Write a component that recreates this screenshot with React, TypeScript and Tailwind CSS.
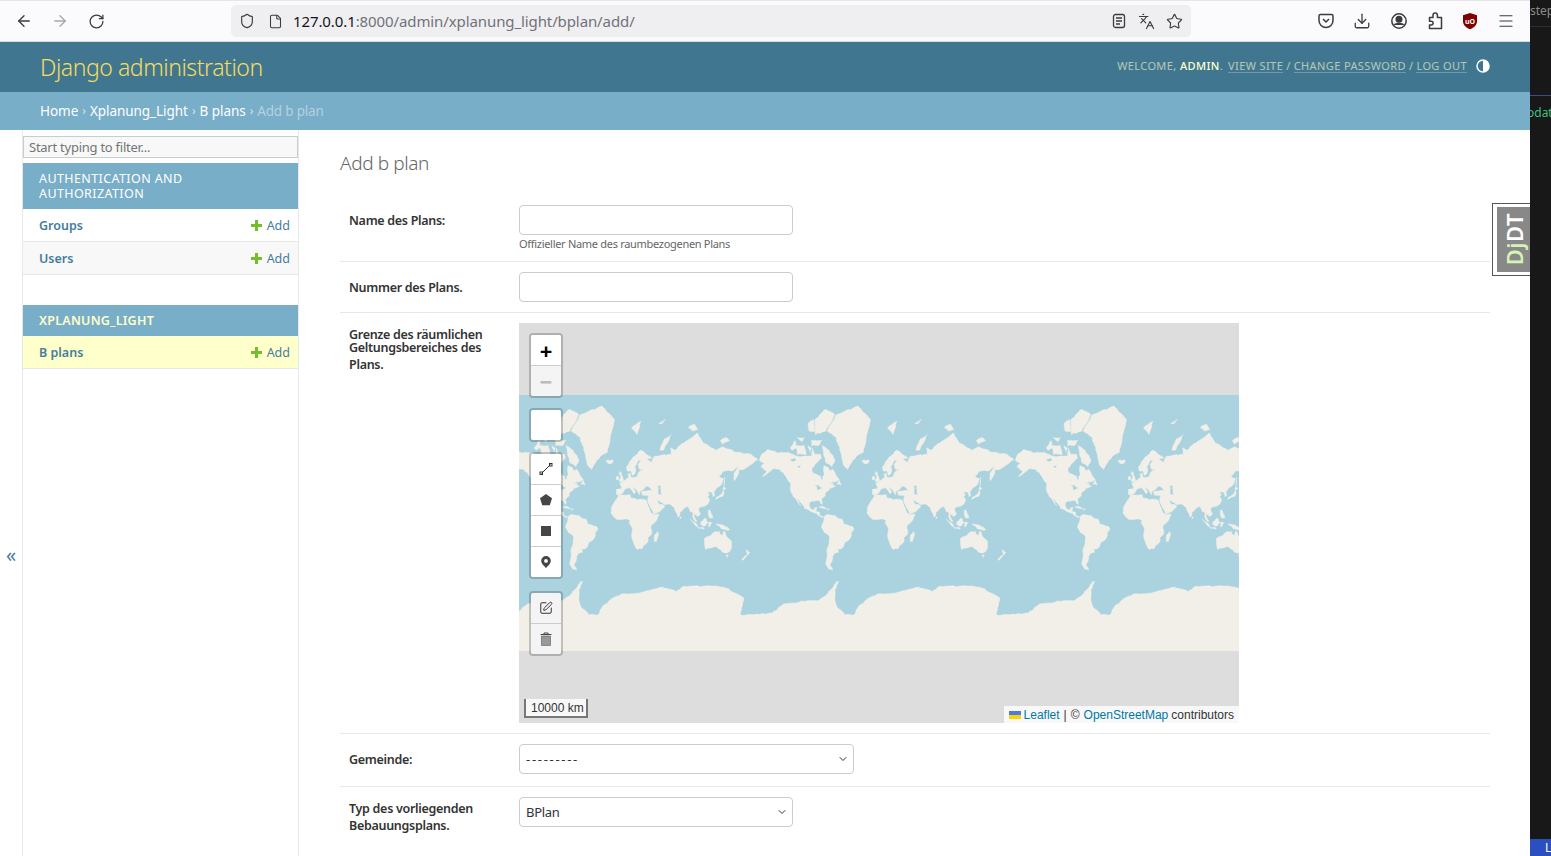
import { ArrowLeft, ArrowRight, ChevronDown, Languages, RotateCw, Shield, Star, Download, File, Menu, SquarePen } from 'lucide-react';

// rough coastlines as lon/lat, projected to a 256px web mercator tile
const LAND: number[][][] = [
  // north america
  [[-168,65.5],[-166,68.5],[-156.5,71.3],[-141,69.7],[-128,70],[-115,68],[-108,68],[-95,68],[-94,72],[-90,69],[-82,69],[-81,67],[-87,64.5],[-94,61],[-94.5,59],[-92,57],[-85,55.3],[-82,55],[-82,52.5],[-79.5,51.5],[-79,54.5],[-77,56],[-78,59],[-77.5,62.5],[-72,61.5],[-69,58.8],[-65,60],[-60,55],[-56,52],[-60,50],[-66,50],[-70,47],[-65,49],[-64.5,47],[-61,46],[-66,44],[-70,43.5],[-70,41.5],[-74,40.5],[-76,37],[-75.5,35.3],[-81,31.5],[-80,26],[-81,25.2],[-82.8,28],[-84,30],[-89,30],[-90,29],[-94,29.5],[-97.5,27.5],[-97.5,22],[-95,18.5],[-91,18.5],[-90.5,21],[-87,21.5],[-88,16],[-83.5,15],[-83.5,11],[-80,9],[-77.5,8.5],[-80,7.5],[-85,10],[-87.5,13],[-92,14.5],[-96,16],[-105,20],[-105.5,23],[-110,27.5],[-113,31.5],[-114.7,31],[-112,26],[-109.5,23],[-112,25],[-115,29],[-117,32.5],[-120.5,34.5],[-124,40],[-124,48],[-128,51],[-133,56],[-140,60],[-148,60.5],[-152,59],[-158,56.5],[-164,54.5],[-158,58.5],[-162,60],[-166,62],[-161,64]],
  // south america
  [[-77.5,8.5],[-75,11],[-72,12],[-68,11],[-62,10.5],[-57,6],[-51,4.5],[-50,0],[-44,-2.5],[-37,-5],[-35,-8],[-39,-14],[-39,-18],[-41,-22],[-48,-26],[-49,-29],[-53,-34],[-58,-34.5],[-57,-38],[-62,-39],[-65,-42],[-66,-47],[-69,-51],[-65,-55],[-71,-54],[-75,-50],[-73,-42],[-73.5,-37],[-71,-30],[-70,-18],[-76,-14],[-81,-6],[-80,-2],[-78,2],[-77,7]],
  // africa
  [[-6,35.8],[10,37],[11,33.5],[20,31],[25,32],[32,31],[34,27],[37,21],[39,15],[43,12],[51,12],[48,5],[40,-3],[39,-7],[40.5,-15],[35,-20],[35.5,-24],[32.5,-28],[27,-34],[20,-34.8],[18,-33],[15,-27],[12,-17],[13.5,-10],[12,-5],[9,-1],[9.5,4],[5,5.5],[-4,5],[-8,4.5],[-13,8.5],[-17,14.5],[-16.5,20],[-13,27],[-9.5,31]],
  // eurasia
  [[-9,37],[-9,43],[-1.5,43.5],[-4.5,48.5],[2,51],[8,54],[8,57],[10.5,57],[11,54],[20,54.5],[21,57],[24,59],[30,60],[23,60],[21,63],[25,65.5],[22,65.8],[17,62],[18,59.5],[16,56],[13,55.5],[11,59],[5.5,59],[5,62],[14,67.5],[25,71],[41,67],[33,66.5],[40,64.5],[44,68],[54,68.5],[68,69],[67,72],[73,71],[80,73],[105,77.5],[113,74],[130,71],[140,72.5],[160,70],[180,69],[190,66],[179,63],[170,60],[163,60],[162,56],[156.5,51],[156,57],[163,62],[155,59],[142,59],[135,54.5],[141,53],[138,47],[131,43],[128,40],[129,36],[126.5,34.5],[126,37.5],[125,39.5],[122,40],[118,39],[122,37],[119,35],[122,31],[120,26],[114,22.5],[108,21.5],[106,19],[109,13],[105,9],[100.5,13.5],[100,9],[104,1.5],[101,3],[98,8.5],[98,15],[94.5,16],[91,22.5],[87,21],[80,15],[80,11],[77.5,8],[73,18],[72,21],[67,25],[57,25.5],[56,27],[50,30],[48,30],[51,25],[56,25],[59,22.5],[52,16],[43.5,12.5],[39,21],[35,28],[34.5,31.5],[36,36],[27,36.5],[26,40],[29,41],[41,41.5],[37,45],[33,46],[28,42],[24,40.5],[23,36.5],[19,42],[13,45.5],[18,40],[15.5,38],[12,42],[9,44.3],[3,43],[0,39],[-5,36]],
  // greenland and arctic islands
  [[-73,78],[-60,82],[-30,83.5],[-12,81],[-18,76],[-22,70],[-32,68],[-42,62],[-44,60],[-50,63],[-54,70],[-60,76]],
  [[-80,73],[-70,71],[-62,66],[-66,62],[-74,64],[-78,69]],
  [[-117,73],[-105,73],[-102,69],[-115,69]],
  [[-90,77],[-75,78],[-62,82],[-75,83],[-90,81]],
  [[-125,72],[-118,75],[-117,72],[-122,71]],
  [[-95,75],[-80,75],[-85,73],[-95,73]],
  [[-115,76],[-105,76],[-108,74.5]],
  [[-100,80],[-92,81],[-90,78],[-98,78]],
  [[-100,73],[-95,72],[-97,70]],
  [[-59,48],[-56,51.5],[-53,47]],
  [[-24,65.5],[-14,66],[-14,64.5],[-20,63.5]],
  [[-5,50],[1,51],[0,53],[-2,56],[-3,58.5],[-6,57],[-3,54],[-5,52]],
  [[-10,52],[-6,52],[-6,55],[-9,54.5]],
  [[12,79],[25,80.5],[20,77]],
  [[52,71],[57,71],[68,77],[58,75.5]],
  [[50,80],[60,81],[55,80]],
  [[92,79],[100,80],[105,78.5],[98,78]],
  [[137,75],[146,76],[150,75],[140,73.5]],
  // asia pacific islands
  [[130,32],[135,34],[140,35],[142,40],[141,41.5],[139,38],[135,35.5],[131,34]],
  [[140,42],[145,43.5],[142,45.5]],
  [[142,46],[143,50],[143,54],[142,50]],
  [[120,18],[122,18],[124,13],[126,7],[122,7],[120,14]],
  [[109,1],[117,7],[119,1],[116,-4],[110,-3]],
  [[95,5.5],[104,-2],[106,-6],[101,-3]],
  [[105,-6.5],[114,-7],[114,-8.5],[106,-7.5]],
  [[120,1],[125,1],[122,-5],[120,-5]],
  [[131,-1],[141,-3],[147,-6],[150,-10],[143,-9],[138,-8]],
  [[80,9.5],[82,7],[80.5,6]],
  [[49,-12],[50,-16],[47,-25],[44,-25],[44,-17]],
  // australia, nz
  [[114,-22],[122,-18],[126,-14],[130,-12],[136,-12],[136,-15],[140,-17.5],[142,-11],[146,-19],[153,-26],[153,-31],[150,-37],[146,-39],[140,-38],[137,-35],[131,-31.5],[124,-33],[116,-35],[115,-31]],
  [[145,-41],[148,-41],[147,-43.5]],
  [[173,-35],[178,-38],[175,-41.5]],
  [[173,-41],[174,-42],[168,-46.5],[167,-45]],
  [[-85,22],[-80,23],[-74,20],[-78,20]],
  [[-74,19.5],[-69,19],[-71,18]],
  // antarctica, runs a little past the tile so copies overlap at the seam
  [[-183,-78],[-150,-77.5],[-135,-74.5],[-120,-74],[-100,-73],[-85,-73],[-75,-71],[-68,-68],[-60,-63.5],[-57,-63],[-62,-68],[-62,-72],[-60,-75],[-48,-78],[-35,-78],[-28,-75],[-15,-72],[0,-70],[15,-70],[30,-69],[40,-68],[55,-66.5],[70,-68],[75,-69],[85,-66],[100,-66],[115,-66],[130,-66],[145,-67],[160,-70],[170,-72],[165,-78],[183,-78],[183,-87],[-183,-87]],
];

const WATER = [
  [[50,37],[54,37],[53,42],[53,46.5],[49,46],[50,42]],
  [[-92,47],[-85,47],[-84,46],[-88,46.500]],
  [[-88,46],[-84,45.500],[-80,44],[-83,43],[-87,42]],
  [[-125,66],[-118,67],[-117,65.500],[-122,65]],
  [[-115,62],[-110,62.500],[-112,61]],
];

function project([lon, lat]: number[]) {
  const x = ((lon + 180) / 360) * 256;
  const y = 128 - (256 / (2 * Math.PI)) * Math.log(Math.tan(Math.PI / 4 + (lat * Math.PI) / 360));
  return [x, y];
}

// cheap repeatable noise so the coast looks jagged instead of straight
let seed = 7;
const wobble = () => {
  seed = (seed * 16807) % 2147483647;
  return (seed / 2147483647 - 0.5) * 1.1;
};

function toPath(poly: number[][]) {
  const pts = poly.map(project);
  let d = '';
  pts.forEach((p, i) => {
    const n = pts[(i + 1) % pts.length];
    const steps = Math.max(1, Math.round(Math.hypot(n[0] - p[0], n[1] - p[1]) / 2.5));
    d += `${d ? 'L' : 'M'}${p[0].toFixed(1)} ${p[1].toFixed(1)}`;
    for (let s = 1; s < steps; s++) {
      const x = p[0] + ((n[0] - p[0]) * s) / steps + wobble();
      const y = p[1] + ((n[1] - p[1]) * s) / steps + wobble();
      d += `L${x.toFixed(1)} ${y.toFixed(1)}`;
    }
  });
  return d + 'Z';
}

const landPath = LAND.map(toPath).join('');
const waterPath = WATER.map(toPath).join('');

function WorldMap() {
  return (
    <svg className="absolute inset-0" width="720" height="400" viewBox="0 0 720 400">
      <rect x="0" y="72" width="720" height="256" fill="#aad3df" />
      <clipPath id="tile"><rect x="0" y="72" width="720" height="256" /></clipPath>
      <g clipPath="url(#tile)">
        {[-280, -24, 232, 488].map((x) => (
          <g key={x} transform={`translate(${x} 72)`}>
            <path d={landPath} fill="#f2efe9" stroke="#f2efe9" strokeWidth="0.4" strokeLinejoin="round" />
            <path d={waterPath} fill="#aad3df" />
          </g>
        ))}
      </g>
    </svg>
  );
}

function NavRow({ label, striped, current }: { label: string; striped?: boolean; current?: boolean }) {
  return (
    <div className={`h-[33px] flex items-center justify-between pl-4 pr-2 pt-[2px] border-b border-[#e8e8e8] text-[12.5px] ${current ? 'bg-[#ffffcc]' : striped ? 'bg-[#f8f8f8]' : 'bg-white'}`}>
      <span className="font-semibold text-[#447e9b]">{label}</span>
      <span className="flex items-center gap-[5px] text-[#447e9b]">
        <svg className="-mt-[2px]" width="11" height="11" viewBox="0 0 11 11"><path d="M4 0h3v4h4v3H7v4H4V7H0V4h4z" fill="#70bf2b" /></svg>
        Add
      </span>
    </div>
  );
}

function BarButton({ children, muted, last }: { children?: React.ReactNode; muted?: boolean; last?: boolean }) {
  return (
    <div className={`w-[30px] flex items-center justify-center ${muted ? 'bg-[#f4f4f4]' : 'bg-white'} ${last ? 'h-[30px]' : 'h-[31px] border-b border-[#ccc]'}`}>
      {children}
    </div>
  );
}

function Bar({ children, className }: { children: React.ReactNode; className?: string }) {
  return (
    <div className={`w-[34px] border-2 border-black/20 rounded-[4px] bg-clip-padding overflow-hidden ${className ?? ''}`}>
      {children}
    </div>
  );
}

function FormRow({ label, children, bottomClass }: { label: React.ReactNode; children: React.ReactNode; bottomClass?: string }) {
  return (
    <div className={`flex border-b border-[#e8e8e8] px-[9px] pt-[10px] ${bottomClass ?? 'pb-[10px]'}`}>
      <div className="w-[170px] shrink-0 text-[12.5px] font-semibold text-[#333] tracking-[-0.3px]">{label}</div>
      <div>{children}</div>
    </div>
  );
}

function SelectBox({ width, value, textClass }: { width: string; value: string; textClass: string }) {
  return (
    <div className={`${width} h-[30px] border border-[#ccc] rounded-[4px] bg-white flex items-center justify-between pl-[6px] pr-[4px] text-[13px] text-[#333]`}>
      <span className={`pt-px ${textClass}`}>{value}</span>
      <ChevronDown size={12} strokeWidth={2} className="text-[#333]" />
    </div>
  );
}

export default function App() {
  return (
    <div className="h-screen w-full overflow-hidden flex bg-[#181818] font-['Noto_Sans',sans-serif]">
      <div className="w-[1530px] shrink-0 h-full flex flex-col bg-white relative">
        {/* Browser toolbar */}
        <div className="h-[42px] shrink-0 bg-[#fbfbfd] border-t border-[#e6e6e8] border-b-[#d9d9dd] border-b flex items-center pl-[15px] pr-[15px] text-[#3b3b40]">
          <ArrowLeft size={18} strokeWidth={1.8} />
          <ArrowRight size={18} strokeWidth={1.8} className="ml-[18px] text-[#a8a8ab]" />
          <RotateCw size={17} strokeWidth={1.8} className="ml-[19px]" />
          <div className="ml-[126px] w-[960px] h-[32px] rounded-[5px] bg-[#efeff1] flex items-center pl-[8px] pr-[8px]">
            <Shield size={16} strokeWidth={1.7} />
            <File size={15} strokeWidth={1.7} className="ml-[13px]" />
            <span className="ml-[10px] text-[15px] tracking-[-0.1px] text-[#15141a]">127.0.0.1<span className="text-[#72727a]">:8000/admin/xplanung_light/bplan/add/</span></span>
            <div className="ml-auto flex items-center gap-[11px]">
              <svg width="16" height="16" viewBox="0 0 16 16" fill="none" stroke="currentColor" strokeWidth="1.3"><rect x="2.5" y="1.5" width="11" height="13" rx="2" /><path d="M5 5h6M5 8h6M5 11h4" /></svg>
              <Languages size={17} strokeWidth={1.6} />
              <Star size={17} strokeWidth={1.6} />
            </div>
          </div>
          <div className="ml-auto flex items-center gap-[18px]">
            <svg width="18" height="18" viewBox="0 0 18 18" fill="none" stroke="currentColor" strokeWidth="1.5"><path d="M3.5 2.5h11a1.5 1.5 0 0 1 1.5 1.5v4.5a7 7 0 0 1-14 0V4a1.500 1.500 0 0 1 1.500-1.500z" /><path d="M6 7l3 3 3-3" /></svg>
            <Download size={18} strokeWidth={1.7} />
            <svg className="ml-px" width="18" height="18" viewBox="0 0 18 18" fill="none" stroke="currentColor" strokeWidth="1.5"><circle cx="9" cy="9" r="7.2" /><circle cx="9" cy="7.200" r="2.800" fill="currentColor" /><path d="M4.500 13c1-2 8-2 9 0" fill="currentColor" /></svg>
            <svg width="18" height="18" viewBox="0 0 18 18" fill="none" stroke="currentColor" strokeWidth="1.5" strokeLinejoin="round"><path d="M7 5.500V3.200a2.200 2.200 0 0 1 4.400 0V5.500h4.100v11H3.500V13h1.700a1.900 1.900 0 0 0 0-3.800H3.500V5.500z" /></svg>
            <svg className="-ml-px" width="18" height="18" viewBox="0 0 18 18"><path d="M9 1l7 2.200v6c0 4-3.500 6.800-7 8-3.500-1.200-7-4-7-8v-6z" fill="#800000" /><text x="9" y="11.500" textAnchor="middle" fontSize="7" fontWeight="700" fill="#fff" fontFamily="Noto Sans, sans-serif">uO</text></svg>
            <Menu size={18} strokeWidth={1.6} />
          </div>
        </div>

        {/* Django header */}
        <div className="h-[50px] shrink-0 bg-[#417690] flex items-center justify-between pl-10 pr-10">
          <span className="text-[23px] font-light text-[#f5dd5d] tracking-[-0.45px]">Django administration</span>
          <div className="flex items-center pb-[2px] text-[11px] tracking-[0.4px] uppercase text-[#ffffcc]/60">
            <span>Welcome, <strong className="font-medium text-[#ffffcc]">admin</strong>.</span>
            <span className="ml-[5px] border-b border-white/25 leading-[13px]">View site</span>
            <span className="mx-[3px]">/</span>
            <span className="border-b border-white/25 leading-[13px]">Change password</span>
            <span className="mx-[3px]">/</span>
            <span className="border-b border-white/25 leading-[13px]">Log out</span>
            <svg className="ml-[9px]" width="14" height="14" viewBox="0 0 14 14"><circle cx="7" cy="7" r="6" fill="none" stroke="#fff" strokeWidth="1.500" /><path d="M7 1a6 6 0 0 1 0 12z" fill="#fff" /></svg>
          </div>
        </div>

        {/* Breadcrumbs */}
        <div className="h-[38px] shrink-0 bg-[#79aec8] flex items-center pl-10 text-[13.5px] text-white tracking-[-0.05px]">
          <span>Home</span>
          <span className="mx-[4px] text-white/70 text-[12px]">›</span>
          <span>Xplanung_Light</span>
          <span className="mx-[4px] text-white/70 text-[12px]">›</span>
          <span>B plans</span>
          <span className="mx-[4px] text-white/70 text-[12px]">›</span>
          <span className="text-white/45 tracking-[-0.2px]">Add b plan</span>
        </div>

        <div className="flex flex-1 min-h-0">
          {/* Sidebar toggle */}
          <div className="w-[23px] shrink-0 border-r border-[#e8e8e8] flex items-center justify-center pt-[124px] text-[20px] text-[#447e9b]">«</div>

          {/* Sidebar */}
          <div className="w-[276px] shrink-0 border-r border-[#e8e8e8] pt-[6px]">
            <div className="h-[22px] border border-[#ccc] bg-[#f8f8f8] flex items-center pl-[5px] pt-px text-[13px] text-[#757575] tracking-[-0.25px]">Start typing to filter...</div>
            <div className="mt-[5px] bg-[#79aec8] pl-4 pr-4 pt-[8px] pb-[8px] text-[12.5px] leading-[15px] tracking-[0.4px] text-white uppercase h-[46px]">Authentication and Authorization</div>
            <NavRow label="Groups" />
            <NavRow label="Users" striped />
            <div className="mt-[30px] h-[31px] bg-[#79aec8] flex items-center pl-4 pt-px text-[12.5px] font-semibold tracking-[0.25px] text-[#ffffcc] uppercase">Xplanung_Light</div>
            <NavRow label="B plans" current />
          </div>

          {/* Content */}
          <div className="flex-1 min-w-0 pl-[41px] pr-10 pt-[20px]">
            <h1 className="text-[19px] leading-[26px] font-light text-[#666] tracking-[-0.4px] mb-[19px]">Add b plan</h1>

            <FormRow label={<span className="block pt-[7px]">Name des Plans:</span>}>
              <div className="w-[274px] h-[30px] border border-[#ccc] rounded-[4px]" />
              <p className="mt-px text-[11px] leading-[15px] text-[#666] tracking-[-0.3px]">Offizieller Name des raumbezogenen Plans</p>
            </FormRow>
            <FormRow label={<span className="block pt-[7px]">Nummer des Plans.</span>}>
              <div className="w-[274px] h-[30px] border border-[#ccc] rounded-[4px]" />
            </FormRow>
            <FormRow label={<span className="block leading-[13px] pt-[5px]">Grenze des räumlichen<br />Geltungsbereiches des<br /><span className="block pt-[4px]">Plans.</span></span>}>
              <div className="relative w-[720px] h-[400px] bg-[#dddddd] overflow-hidden">
                <WorldMap />
                {/* Leaflet controls */}
                <div className="absolute left-[10px] top-[10px] flex flex-col">
                  <Bar>
                    <BarButton><span className="text-[22px] font-bold text-black leading-none">+</span></BarButton>
                    <BarButton muted last><span className="text-[22px] font-bold text-[#bbb] leading-none">−</span></BarButton>
                  </Bar>
                  <Bar className="mt-[10px]"><BarButton last /></Bar>
                  <Bar className="mt-[10px]">
                    <BarButton>
                      <svg width="14" height="14" viewBox="0 0 14 14" fill="none" stroke="#333" strokeWidth="1"><path d="M2.500 11.500l9-9" /><rect x="1" y="10" width="2.500" height="2.500" /><rect x="10.500" y="1.500" width="2.500" height="2.500" /></svg>
                    </BarButton>
                    <BarButton>
                      <svg width="14" height="14" viewBox="0 0 14 14"><path d="M7 1l6 4.200-2.200 7H3.200L1 5.200z" fill="#464646" /></svg>
                    </BarButton>
                    <BarButton>
                      <div className="w-[10px] h-[10px] bg-[#464646]" />
                    </BarButton>
                    <BarButton last>
                      <svg width="12" height="14" viewBox="0 0 12 14"><path fillRule="evenodd" d="M6 1a4.800 4.800 0 0 1 4.800 4.800c0 3-2.800 5-4.800 7.200-2-2.200-4.800-4.200-4.800-7.200A4.800 4.800 0 0 1 6 1zm0 3a1.900 1.900 0 1 0 0 3.800 1.900 1.900 0 0 0 0-3.800z" fill="#464646" /></svg>
                    </BarButton>
                  </Bar>
                  <Bar className="mt-[12px]">
                    <BarButton muted>
                      <SquarePen size={14} strokeWidth={1.7} className="text-[#333]" />
                    </BarButton>
                    <BarButton muted last>
                      <svg width="12" height="14" viewBox="0 0 12 14"><path d="M0.500 2.500h11M4 2.500V1h4v1.500" stroke="#464646" fill="none" /><path d="M1.500 4h9v9.500h-9z" fill="#999" stroke="#464646" strokeWidth="0.500" /></svg>
                    </BarButton>
                  </Bar>
                </div>
                {/* Scale and attribution */}
                <div className="absolute left-[5px] bottom-[5px] h-[19px] w-[64px] border-2 border-t-0 border-[#777] bg-white/80 font-['Liberation_Sans',sans-serif] text-[12px] leading-[19px] pl-[5px] text-[#333] whitespace-nowrap">10000 km</div>
                <div className="absolute right-0 bottom-0 h-[17px] pt-px bg-white/80 font-['Liberation_Sans',sans-serif] text-[12px] leading-[17px] px-[5px] text-[#333] flex items-center whitespace-nowrap">
                  <svg className="mr-[3px]" width="12" height="8" viewBox="0 0 12 8"><rect width="12" height="4" fill="#4C7BE1" /><rect y="4" width="12" height="4" fill="#FFD500" /></svg>
                  <span className="text-[#0078a8]">Leaflet</span>
                  <span className="mx-[4px]">|</span>
                  <span>©</span>
                  <span className="ml-[4px] text-[#0078a8]">OpenStreetMap</span>
                  <span className="ml-[3px]">contributors</span>
                </div>
              </div>
            </FormRow>
            <FormRow label={<span className="block pt-[7px]">Gemeinde:</span>} bottomClass="pb-[12px]">
              <SelectBox width="w-[335px]" value="---------" textClass="tracking-[1.7px]" />
            </FormRow>
            <FormRow label={<span className="block leading-[17px] pt-[3px]">Typ des vorliegenden<br />Bebauungsplans.</span>} bottomClass="pb-[23px]">
              <SelectBox width="w-[274px]" value="BPlan" textClass="tracking-[-0.3px]" />
            </FormRow>
          </div>
        </div>

        {/* Debug toolbar handle */}
        <div className="absolute right-0 top-[203px] w-[38px] h-[73px] bg-white border border-r-0 border-[#555] pl-[4px] py-[3px]">
          <div className="w-full h-full bg-[#888] flex items-center justify-center">
            <span className="[writing-mode:vertical-rl] rotate-180 text-[22px] font-semibold text-white leading-none tracking-[0.5px]"><span className="text-[#d7f2b4]">Dj</span>DT</span>
          </div>
        </div>
      </div>

      {/* Editor window peeking out behind the browser */}
      <div className="flex-1 min-w-0 relative overflow-hidden text-[12px]">
        <span className="absolute left-0 top-[2px] text-[#8a8a8a]">step</span>
        <div className="absolute left-0 right-0 top-[26px] h-px bg-[#2e2e2e]" />
        <div className="absolute left-0 right-0 top-[95px] h-px bg-[#3b4a8a]" />
        <span className="absolute left-[-3px] top-[104px] text-[#3fbf80]">odat</span>
        <div className="absolute left-0 right-0 bottom-0 h-[17px] bg-[#2b4fc0] text-white pl-[15px] leading-[17px]">L</div>
      </div>
    </div>
  );
}
